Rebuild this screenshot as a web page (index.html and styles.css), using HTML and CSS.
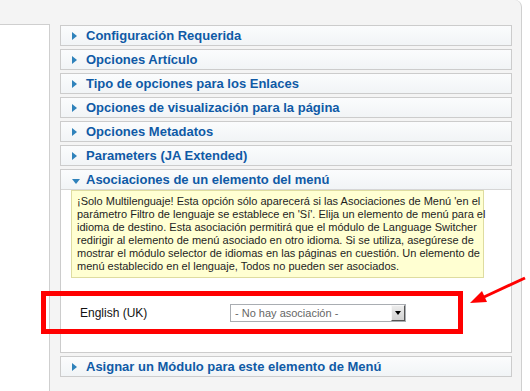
FILE: index.html
```html
<!DOCTYPE html>
<html lang="es">
<head>
  <meta charset="UTF-8">
  <title>Asociaciones de menú</title>
  <link rel="stylesheet" href="styles.css">
</head>
<body>

<div class="page">
  <div class="sidebar"></div>

  <div class="panels">
    <h3 class="pane">Configuración Requerida</h3>
    <h3 class="pane">Opciones Artículo</h3>
    <h3 class="pane">Tipo de opciones para los Enlaces</h3>
    <h3 class="pane">Opciones de visualización para la página</h3>
    <h3 class="pane">Opciones Metadatos</h3>
    <h3 class="pane">Parameters (JA Extended)</h3>

    <div class="pane-open">
      <h3 class="pane open">Asociaciones de un elemento del menú</h3>
      <div class="pane-body">
        <p class="notice">¡Solo Multilenguaje! Esta opción sólo aparecerá si las Asociaciones de Menú 'en el<br>
          parámetro Filtro de lenguaje se establece en 'Sí'. Elija un elemento de menú para el<br>
          idioma de destino. Esta asociación permitirá que el módulo de Language Switcher<br>
          redirigir al elemento de menú asociado en otro idioma. Si se utiliza, asegúrese de<br>
          mostrar el módulo selector de idiomas en las páginas en cuestión. Un elemento de<br>
          menú establecido en el lenguaje, Todos no pueden ser asociados.</p>
        <div class="assoc-row">
          <label>English (UK)</label>
          <div class="select">
            <span>- No hay asociación -</span>
            <span class="select-btn"></span>
          </div>
        </div>
      </div>
    </div>

    <h3 class="pane">Asignar un Módulo para este elemento de Menú</h3>
  </div>

  <!-- marcas rojas de la captura -->
  <div class="mark-box"></div>
  <svg class="mark-arrow" width="70" height="40" viewBox="0 0 70 40">
    <line x1="65" y1="8" x2="24" y2="27" stroke="#ff0000" stroke-width="3"/>
    <polygon points="10,33 27,32 22,21" fill="#ff0000"/>
  </svg>
</div>

</body>
</html>
```

FILE: styles.css
```css
body {
  margin: 0;
  background: #fff;
  font-family: "Liberation Sans", Arial, sans-serif;
}

.page {
  position: relative;
  display: grid;
  grid-template-columns: 50px 452px;
  column-gap: 10px;
  align-items: start;
  width: 512px;
  height: 366px;
  padding: 25px 9px 0 0;
  box-sizing: content-box;
  background: #f4f4f4;
  border-right: 1px solid #cfcfcf;
  border-top-right-radius: 7px;
}

.sidebar {
  margin-top: -1px;
  height: 367px;
  background: #fff;
  border-top: 1px solid #cfcfcf;
  border-right: 1px solid #cfcfcf;
  box-sizing: border-box;
}

.pane {
  display: flex;
  align-items: center;
  height: 19px;
  margin: 0 0 3px;
  padding-left: 11px;
  border: 1px solid #cccccc;
  background: linear-gradient(#fbfcfd, #f1f4f6);
  color: #0f5aa6;
  font-size: 13px;
  font-weight: bold;
  line-height: 19px;
  white-space: nowrap;
}

.pane::before {
  content: "";
  width: 0;
  height: 0;
  margin-right: 9px;
  border-left: 5px solid #2f82bb;
  border-top: 4px solid transparent;
  border-bottom: 4px solid transparent;
}

.pane-open {
  margin-bottom: 3px;
  border: 1px solid #cccccc;
  background: #fff;
}

.pane.open {
  margin: 0;
  border: none;
  border-bottom: 1px solid #d6d6d6;
}

.pane.open::before {
  margin: 4px 6px 0 0;
  border-left: 4px solid transparent;
  border-right: 4px solid transparent;
  border-top: 5px solid #2f82bb;
  border-bottom: none;
}

.pane-body {
  padding: 0 27px 30px 10px;
}

.notice {
  margin: 0;
  padding: 4px 5px;
  background: #ffffd2;
  border: 1px solid #dedca0;
  color: #1e1e1e;
  font-size: 11px;
  line-height: 13px;
  white-space: nowrap;
}

.assoc-row {
  display: flex;
  align-items: center;
  margin-top: 26px;
  padding-left: 9px;
}

.assoc-row label {
  width: 150px;
  color: #111;
  font-size: 12px;
}

.select {
  display: flex;
  align-items: center;
  justify-content: space-between;
  width: 176px;
  height: 18px;
  padding-left: 4px;
  box-sizing: border-box;
  border: 1px solid #a9adb2;
  background: #fff;
  color: #666;
  font-size: 11px;
}

.select-btn {
  display: flex;
  align-items: center;
  justify-content: center;
  width: 14px;
  height: 16px;
  box-sizing: border-box;
  background: linear-gradient(#ececec, #d2d2d2);
  border-top: 1px solid #f8f8f8;
  border-left: 1px solid #f8f8f8;
  border-right: 1px solid #555;
  border-bottom: 1px solid #555;
}

.select-btn::after {
  content: "";
  border-top: 4px solid #000;
  border-left: 3px solid transparent;
  border-right: 3px solid transparent;
}

.mark-box {
  position: absolute;
  left: 41px;
  top: 291px;
  width: 412px;
  height: 33px;
  border: 5px solid #ff0000;
}

.mark-arrow {
  position: absolute;
  left: 460px;
  top: 270px;
}
```
